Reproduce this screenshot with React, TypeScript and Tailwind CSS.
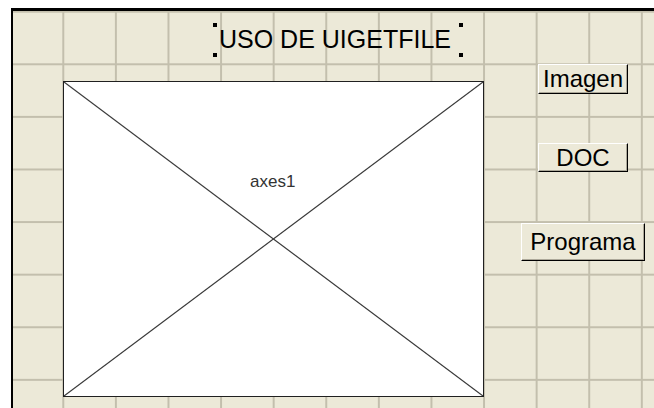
import React from "react";

const font = { fontFamily: '"Liberation Sans", Arial, sans-serif' };

function Btn({ label, cls }: { label: string; cls: string }) {
  return (
    <div
      className={
        "absolute flex items-center justify-center bg-[#ece9d8] border-t border-l border-t-white border-l-white border-r border-b border-r-black border-b-black shadow-[inset_-1px_-1px_0_#aca899] text-black text-[24px] leading-[24px] " +
        cls
      }
    >
      {label}
    </div>
  );
}

export default function App() {
  return (
    <div
      className="w-[654px] h-[408px] bg-white pl-[11px] pt-[8px] flex overflow-hidden"
      style={font}
    >
      <div className="relative flex-1 border-t-[3px] border-l-[2px] border-black bg-[#ece9d8] [background-image:linear-gradient(to_right,#c3bfad_2px,transparent_2px),linear-gradient(to_bottom,#c3bfad_2px,transparent_2px)] [background-size:52.6px_52.6px] [background-position:49.3px_-0.3px]">
        {/* Title label with selection handles */}
        <div className="absolute left-[206px] top-[16px] text-[25px] leading-[25px] text-black whitespace-nowrap">
          USO DE UIGETFILE
        </div>
        <div className="absolute left-[200px] top-[12px] w-[4px] h-[4px] bg-black" />
        <div className="absolute left-[200px] top-[42px] w-[4px] h-[4px] bg-black" />
        <div className="absolute left-[446px] top-[12px] w-[4px] h-[4px] bg-black" />
        <div className="absolute left-[446px] top-[42px] w-[4px] h-[4px] bg-black" />

        {/* Axes */}
        <div className="absolute left-[50px] top-[70px] w-[421px] h-[316px] bg-white border border-[#202020]">
          <svg
            className="absolute inset-0"
            width="419"
            height="314"
            viewBox="0 0 419 314"
          >
            <line x1="0" y1="0" x2="419" y2="314" stroke="#3a3a3a" strokeWidth="1.2" />
            <line x1="0" y1="314" x2="419" y2="0" stroke="#3a3a3a" strokeWidth="1.2" />
          </svg>
          <div className="absolute left-[186px] top-[91px] text-[17px] leading-[17px] text-[#333]">
            axes1
          </div>
        </div>

        {/* Buttons */}
        <Btn label="Imagen" cls="left-[525px] top-[53px] w-[90px] h-[30px]" />
        <Btn label="DOC" cls="left-[525px] top-[132px] w-[90px] h-[29px]" />
        <Btn label="Programa" cls="left-[508px] top-[212px] w-[124px] h-[38px]" />
      </div>
    </div>
  );
}
